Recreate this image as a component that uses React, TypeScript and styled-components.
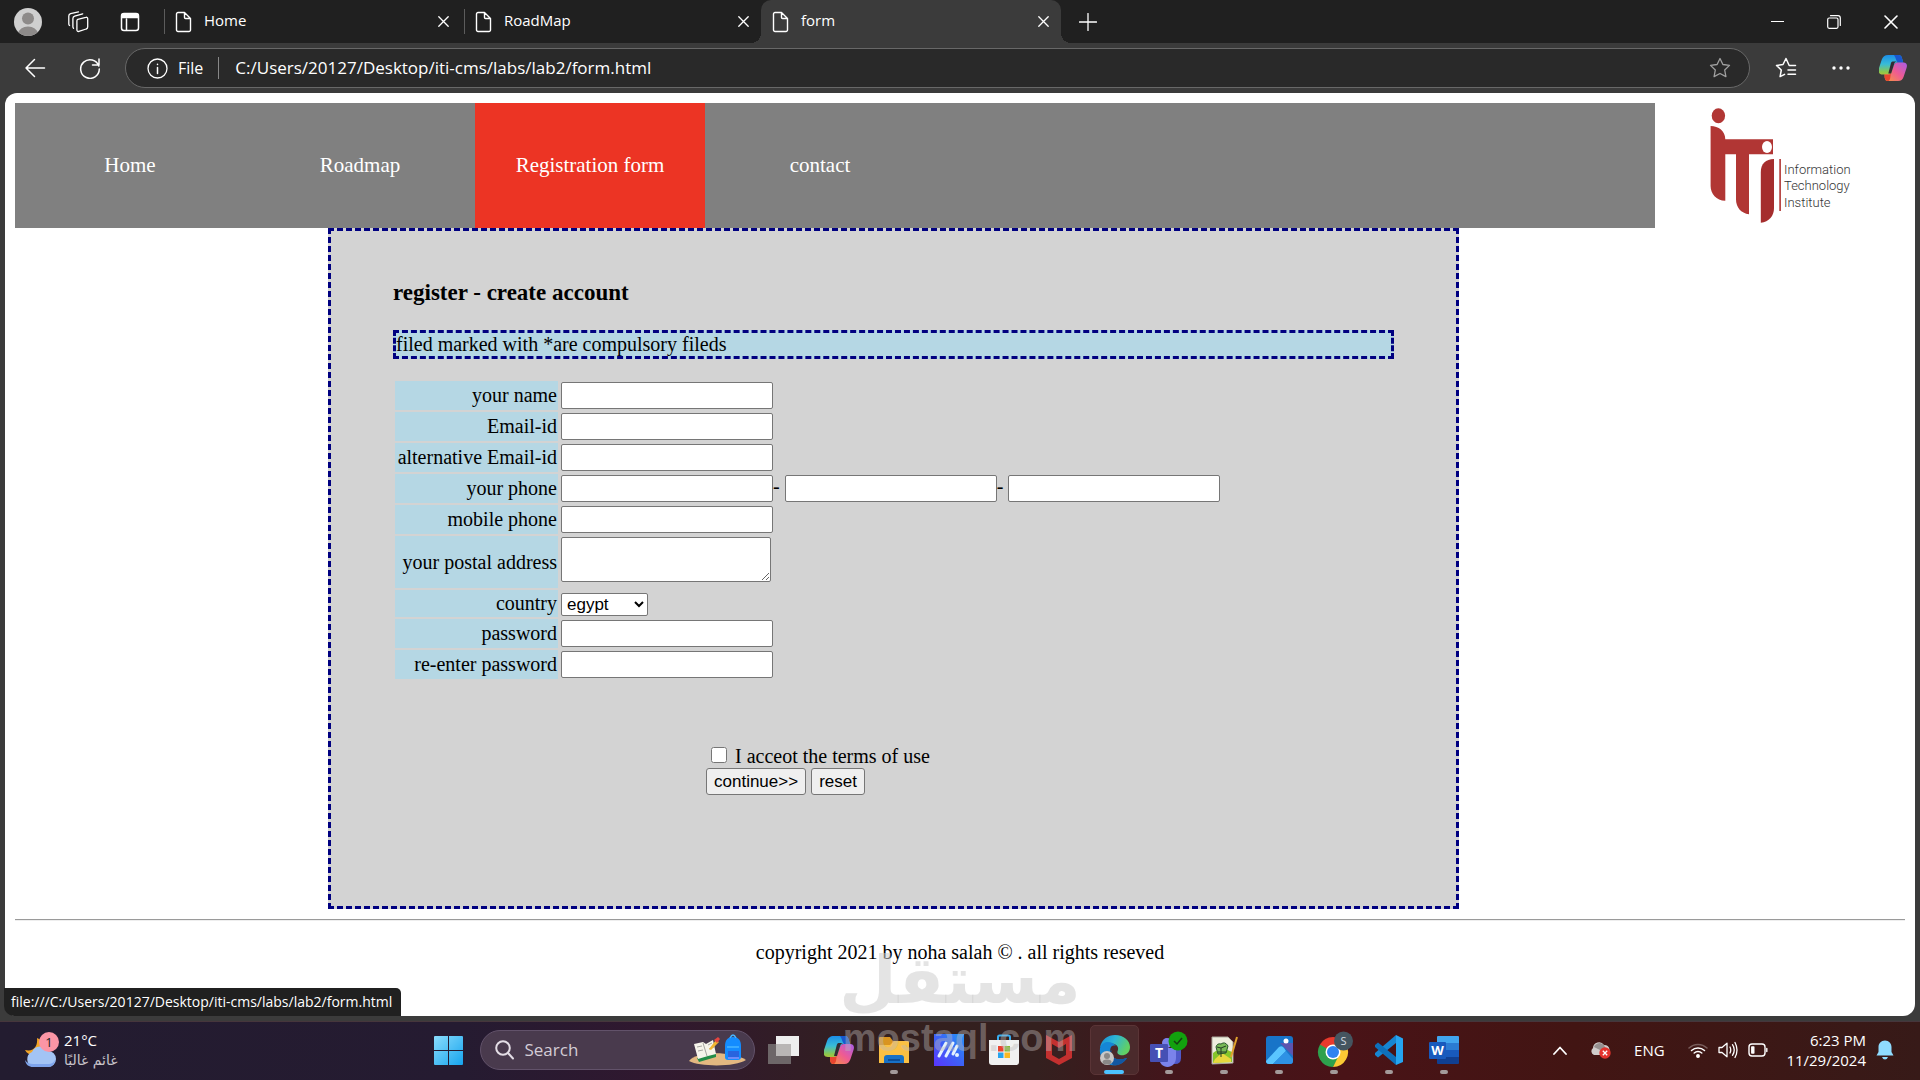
import React from "react";
import styled, { createGlobalStyle, css } from "styled-components";

const UI = `"Open Sans", "Noto Sans", "DejaVu Sans", sans-serif`;
const SERIF = `"Liberation Serif", "Times New Roman", serif`;
const SANS = `"Liberation Sans", Arial, sans-serif`;

const GlobalStyle = createGlobalStyle`
  *, *::before, *::after { box-sizing: border-box; }
  body { margin: 0; background: #3b3b3b; }
  button { font-family: inherit; color: inherit; cursor: pointer; }
`;

const Screen = styled.div`
  position: relative;
  display: flex;
  flex-direction: column;
  min-height: 100vh;
  font-family: ${UI};
`;

const PlainButton = styled.button<{ $w: number }>`
  display: flex;
  align-items: center;
  justify-content: center;
  flex: none;
  width: ${(p) => p.$w}px;
  height: 40px;
  padding: 0;
  border: 0;
  background: transparent;
`;

/* ---------- browser chrome ---------- */

const TabStrip = styled.header`
  display: flex;
  align-items: center;
  height: 43px;
  padding-left: 2px;
  background: #202020;
  color: #fff;
`;

const Tools = styled.div`
  display: flex;
  width: 159px;
`;

const Tab = styled.div<{ $active?: boolean }>`
  position: relative;
  display: flex;
  align-items: center;
  gap: 12px;
  width: 300px;
  height: 43px;
  padding: 0 3px 0 11px;
  font-size: 15px;
  ${(p) =>
    p.$active
      ? css`
          background: #3b3b3b;
          border-radius: 10px 10px 0 0;
          &::before,
          &::after {
            content: "";
            position: absolute;
            bottom: 0;
            width: 10px;
            height: 10px;
          }
          &::before {
            left: -10px;
            background: radial-gradient(circle at 0 0, #202020 10px, #3b3b3b 10px);
          }
          &::after {
            right: -10px;
            background: radial-gradient(circle at 100% 0, #202020 10px, #3b3b3b 10px);
          }
        `
      : css`
          background: linear-gradient(#5c5c5c, #5c5c5c) 3px 50% / 1px 25px no-repeat;
          padding-left: 14px;
        `}
`;

const TabTitle = styled.button`
  flex: 1;
  padding: 0 0 3px;
  border: 0;
  background: none;
  font-size: 15px;
  line-height: 20px;
  text-align: left;
`;

const WindowButtons = styled.div`
  display: flex;
  margin-left: auto;
`;

const Toolbar = styled.div`
  display: flex;
  align-items: center;
  height: 50px;
  padding: 0 2px 0 7px;
  background: #3b3b3b;
  color: #fff;
`;

const AddressBar = styled.div`
  display: flex;
  align-items: center;
  flex: 1;
  height: 40px;
  margin: 0 8px 0 7px;
  padding: 0 10px 0 21px;
  border: 1px solid #686868;
  border-radius: 20px;
  background: #292929;
`;

const Scheme = styled.span`
  padding: 0 15px 0 10px;
  border-right: 1px solid #888;
  font-size: 16px;
  line-height: 22px;
`;

const Address = styled.input`
  flex: 1;
  min-width: 0;
  margin-left: 16px;
  padding: 0;
  border: 0;
  outline: 0;
  background: transparent;
  color: #fff;
  font: 17px/24px ${UI};
`;

/* ---------- web page ---------- */

const Viewport = styled.div`
  position: relative;
  flex: 1;
  margin: 0 5px 5px;
  padding: 10px;
  border-radius: 12px;
  background: #fff;
  color: #000;
  font: 20px/23px ${SERIF};
`;

const PageHeader = styled.div`
  display: flex;
`;

const Nav = styled.nav`
  display: flex;
  flex: 1;
  height: 125px;
  background: #808080;
`;

const NavLink = styled.a<{ $active?: boolean }>`
  display: flex;
  align-items: center;
  justify-content: center;
  width: 230px;
  background: ${(p) => (p.$active ? "#ec3424" : "transparent")};
  color: #fff;
  font-size: 21px;
  text-decoration: none;
`;

const Form = styled.form`
  max-width: 1131px;
  margin-left: 313px;
  padding: 26px 62px 49px;
  border: 3px dashed #000080;
  background: #d3d3d3;
`;

const Title = styled.h3`
  margin: 22px 0 24px;
  font-size: 23px;
  line-height: 27px;
`;

const Notice = styled.div`
  margin-bottom: 20px;
  border: 3px dashed #000080;
  background: #b5d7e4;
`;

const Fields = styled.table`
  border-spacing: 2px;
`;

const LabelCell = styled.th`
  width: 163px;
  padding: 1px;
  background: #b5d7e4;
  font-weight: normal;
  text-align: right;
  white-space: nowrap;
`;

const FieldCell = styled.td<{ $bottom?: number }>`
  padding: 1px 1px ${(p) => p.$bottom ?? 1}px;
`;

const Split = styled.div`
  display: flex;
  white-space: pre;
`;

const boxed = css`
  display: block;
  border: 1px solid #767676;
  border-radius: 2px;
  background: #fff;
  font: 17px/20px ${SANS};
`;

const TextBox = styled.input`
  ${boxed}
  width: 212px;
  height: 27px;
  padding: 1px 2px;
`;

const AddressBox = styled.textarea`
  ${boxed}
  width: 210px;
  height: 45px;
  padding: 2px;
`;

const Country = styled.select`
  ${boxed}
  width: 87px;
  height: 23px;
  margin: 2px 0 0;
  padding: 0 0 0 1px;
  color: #000;
`;

const Actions = styled.div`
  margin: 62px 0 62px 313px;
`;

const Terms = styled.label`
  display: flex;
  align-items: center;
  gap: 8px;
  height: 25px;
  padding-top: 2px;
  padding-left: 5px;
`;

const Tick = styled.input`
  width: 16px;
  height: 16px;
  margin: 0 0 4px;
`;

const Buttons = styled.div`
  display: flex;
  gap: 5px;
`;

const FormButton = styled.button`
  height: 27px;
  padding: 0 7px;
  border: 1px solid #767676;
  border-radius: 3px;
  background: #efefef;
  font: 17px/20px ${SANS};
`;

const Rule = styled.hr`
  height: 2px;
  margin: 10px 0 20px;
  border: 0;
  border-top: 1px solid #9a9a9a;
  border-bottom: 1px solid #eee;
`;

const Copyright = styled.p`
  margin: 0;
  text-align: center;
`;

const StatusBubble = styled.div`
  position: absolute;
  left: -1px;
  bottom: 0;
  height: 28px;
  padding: 0 9px 0 7px;
  border-radius: 0 5px 0 10px;
  background: #202020;
  color: #fff;
  font: 14px/27px ${UI};
`;

/* ---------- watermark ---------- */

const Watermark = styled.div`
  position: absolute;
  left: 0;
  right: 0;
  bottom: 20px;
  display: flex;
  flex-direction: column;
  align-items: center;
  pointer-events: none;
`;

const WatermarkArabic = styled.span`
  color: rgba(205, 205, 205, 0.55);
  font: bold 66px/70px "DejaVu Sans", sans-serif;
`;

const WatermarkLatin = styled.span`
  color: rgba(190, 185, 185, 0.42);
  font: bold 38px/44px ${SANS};
`;

/* ---------- taskbar ---------- */

const Taskbar = styled.footer`
  display: grid;
  grid-template-columns: 1fr auto 1fr;
  align-items: center;
  height: 59px;
  padding-bottom: 2px;
  border-top: 1px solid #46363c;
  background: linear-gradient(90deg, #231c30 0%, #251b31 24%, #30182f 34%, #33201f 46%, #34201f 54%, #43151b 61%, #491317 70%, #421513 82%, #371a18 100%);
  color: #fff;
`;

const Weather = styled.button`
  display: flex;
  align-items: center;
  gap: 5px;
  justify-self: start;
  margin-left: 22px;
  padding: 0;
  border: 0;
  background: none;
  text-align: left;
`;

const WeatherText = styled.span`
  display: grid;
  font-size: 15px;
  line-height: 20px;
`;

const Muted = styled.span`
  color: #c8c3ca;
  font-family: "DejaVu Sans", sans-serif;
  font-size: 14px;
`;

const Dock = styled.div`
  display: flex;
  align-items: center;
  margin-right: 28px;
`;

const SearchPill = styled.label`
  display: flex;
  align-items: center;
  width: 275px;
  height: 40px;
  margin: 0 2px 0 4px;
  padding: 0 8px 0 14px;
  border: 1px solid #62526a;
  border-radius: 20px;
  background: #493a4d;
`;

const SearchBox = styled.input`
  flex: 1;
  min-width: 0;
  margin-left: 11px;
  padding: 0;
  border: 0;
  outline: 0;
  background: none;
  font: 17px/24px ${UI};
  &::placeholder {
    color: #d3ccd5;
    opacity: 1;
  }
`;

const AppButton = styled.button<{ $state?: "open" | "active" }>`
  display: grid;
  place-items: center;
  width: 49px;
  height: 50px;
  margin: 0 3px;
  padding: 0;
  border: 1px solid ${(p) => (p.$state === "active" ? "#5a3436" : "transparent")};
  border-radius: 5px;
  background: ${(p) => (p.$state === "active" ? "#4b2a2c" : "transparent")};
  position: relative;
  &::after {
    content: "";
    position: absolute;
    bottom: 0;
    width: ${(p) => (p.$state === "active" ? 20 : 8)}px;
    height: 4px;
    border-radius: 2px;
    background: ${(p) => (p.$state === "active" ? "#4cc2ff" : p.$state === "open" ? "#a39a9a" : "transparent")};
  }
`;

const Tray = styled.div`
  display: flex;
  align-items: center;
  justify-self: end;
  padding-right: 26px;
  font-size: 15px;
`;

const Language = styled.button`
  width: 58px;
  padding: 0;
  border: 0;
  background: none;
  font-size: 15px;
`;

const Status = styled.button`
  display: flex;
  align-items: center;
  gap: 10px;
  margin: 0 18px 0 10px;
  padding: 0;
  border: 0;
  background: none;
`;

const Clock = styled.time`
  margin-right: 10px;
  font-size: 15px;
  line-height: 20px;
  text-align: right;
`;

/* ---------- icons ---------- */

const line = { fill: "none", stroke: "currentColor", strokeLinecap: "round", strokeLinejoin: "round" } as const;

const PageIcon = () => (
  <svg width="17" height="22" viewBox="0 0 17 22" {...line} strokeWidth="1.4">
    <path d="M3 1.5h6.5L15.500 7.500V19a1.500 1.500 0 0 1-1.500 1.500H3A1.500 1.500 0 0 1 1.500 19V3A1.500 1.500 0 0 1 3 1.500ZM9.500 1.800V6.500a1 1 0 0 0 1 1h4.800" />
  </svg>
);

const CrossIcon = ({ size = 11 }: { size?: number }) => (
  <svg width={size} height={size} viewBox="0 0 11 11" {...line} strokeWidth="1.3">
    <path d="M.8.8 10.200 10.200M10.200.8.8 10.200" />
  </svg>
);

const ProfileIcon = () => (
  <svg width="28" height="28" viewBox="0 0 28 28">
    <clipPath id="face"><circle cx="14" cy="14" r="14" /></clipPath>
    <g clipPath="url(#face)">
      <rect width="28" height="28" fill="#cfcfcf" />
      <circle cx="14" cy="10.500" r="6" fill="#8d8a89" />
      <ellipse cx="14" cy="25" rx="9.500" ry="6.500" fill="#8d8a89" />
    </g>
  </svg>
);

const WorkspacesIcon = () => (
  <svg width="22" height="22" viewBox="0 0 22 22" {...line} strokeWidth="1.3">
    <path d="m10.800 8.300 8-2a1.500 1.500 0 0 1 1.900 1.500v8.300a2 2 0 0 1-1.500 1.900l-7.300 2.400a1.500 1.500 0 0 1-2-1.500v-8.700a2 2 0 0 1 .9-1.900ZM6.500 17.200a1.800 1.800 0 0 1-.6-1.400V7.600a2.500 2.500 0 0 1 1.800-2.400l8-2.400M2.600 14.500a1.800 1.800 0 0 1-.8-1.500V5a2.500 2.500 0 0 1 1.800-2.400L11.500.8" />
  </svg>
);

const TabActionsIcon = () => (
  <svg width="20" height="20" viewBox="0 0 20 20" {...line} strokeWidth="1.500">
    <rect x="1.500" y="1.500" width="17" height="17" rx="2.500" />
    <path d="M2 2.500h16v3H2z" fill="currentColor" />
    <path d="M6.500 7v11" />
  </svg>
);

const BackIcon = () => (
  <svg width="22" height="20" viewBox="0 0 22 20" {...line} strokeWidth="1.500"><path d="M20.500 10H2m8.500-8.500L2 10l8.500 8.500" /></svg>
);

const RefreshIcon = () => (
  <svg width="22" height="22" viewBox="0 0 22 22" {...line} strokeWidth="1.500"><path d="M19.800 9A9.300 9.300 0 1 0 20.300 12M20 2v6h-6.500" /></svg>
);

const InfoIcon = () => (
  <svg width="21" height="21" viewBox="0 0 21 21" {...line} strokeWidth="1.300"><circle cx="10.500" cy="10.500" r="9.500" /><path d="M10.500 9.500v6M10.500 6.200v.3" strokeWidth="1.500" /></svg>
);

const StarIcon = () => (
  <svg width="22" height="22" viewBox="0 0 22 22" {...line} stroke="#a0a0a0" strokeWidth="1.300"><path d="m11 1.500 2.900 6 6.600.9-4.800 4.600 1.200 6.600L11 16.500l-5.900 3.100L6.300 13 1.500 8.400l6.600-.9Z" /></svg>
);

const FavoritesIcon = () => (
  <svg width="22" height="22" viewBox="0 0 22 22" {...line} strokeWidth="1.500"><path d="M20.500 8.500h-6.300L11 1.500 8 7.500l-6.500.9L6.300 13l-1.200 6.600 4.500-2.300M13 13h7.500M13 17.300h7.500" /></svg>
);

const CopilotIcon = ({ id, size = 30 }: { id: string; size?: number }) => (
  <svg width={size} height={size} viewBox="0 0 30 30">
    <defs>
      <linearGradient id={`${id}a`} x2="0" y2="1"><stop stopColor="#1c8ee8" /><stop offset=".35" stopColor="#38bcd8" /><stop offset=".65" stopColor="#8dc84a" /><stop offset="1" stopColor="#f7b52e" /></linearGradient>
      <linearGradient id={`${id}b`} x1="1" x2="0" y2="1"><stop stopColor="#a85ce8" /><stop offset=".5" stopColor="#ef5b92" /><stop offset="1" stopColor="#f79a3c" /></linearGradient>
    </defs>
    <path d="M10 1h11c2 0 3 1 3.500 3L26 9h-6c-2 0-3 1-3.600 3L13 24c-.8 3-2 5-4 5-2-1-2-4-3-7H4c-4 0-5-3-4-7L3 6c1-3 3-5 7-5Z" fill={`url(#${id}a)`} />
    <path d="M16 1h5c2 0 3 1 3.500 3L26 9h-6c-2-2-2-6-4-8Z" fill="#1957cf" />
    <path d="M20 9h6c4 0 4.500 3 3.500 6l-3 9c-1 3-3 5-6 5h-11c-2 0-3-1-3.500-4L6 22h4c2 0 3-1 3.600-3L16 12c.8-2 2-3 4-3Z" fill={`url(#${id}b)`} />
    <path d="M6 22h4c1 0 2-.5 2.700-1.300L12 26c-.6 2-1.400 3-2.500 3-2 0-3-1-3.500-4Z" fill="#e8452f" />
    <path d="M14.500 8h4.500c-2 .5-2.500 1.500-3 3.500L13 21h-3l2.500-10c.3-1.500 1-3 2-3Z" fill="#332b33" />
  </svg>
);

const ItiLogo = () => (
  <svg width="250" height="125" viewBox="0 0 250 125" role="img" aria-label="Information Technology Institute">
    <g fill="#b13634">
      <ellipse cx="63.400" cy="12.700" rx="6.700" ry="7.500" />
      <path d="M55.600 23c8 0 14.700 5 14.700 13.300H118v15H94v60c-8-1-13-7-13-15v-45H70.300v46.400c-9 0-14.700-7-14.700-14.700Z" />
      <path d="M119 56v49c0 8-5 14-13.200 14.700V69c0-8 5-13 13.200-13Z" fill="#a52d2d" />
      <rect x="124.300" y="56" width="1.600" height="52" />
    </g>
    <ellipse cx="112" cy="44" rx="5" ry="6" fill="#fff" />
    <g fill="#333" fontFamily="Roboto, sans-serif" fontWeight="300" fontSize="13">
      <text x="129" y="71">Information</text>
      <text x="129" y="87">Technology</text>
      <text x="129" y="104">Institute</text>
    </g>
  </svg>
);

const WeatherIcon = () => (
  <svg width="37" height="38" viewBox="0 0 37 38">
    <path d="M15 7c1 8-3 14-12 12 3 6 12 7 17 1l3-9Z" fill="#f2a526" />
    <path d="M11 36a8 8 0 0 1-1-15 9 9 0 0 1 16-1 7.800 7.800 0 0 1 0 16Z" fill="#a3c4f5" />
    <path d="M3 29c1 5 4 7 8 7h15c4 0 7-3 7-7-2 4-5 4-8 4H11c-3 0-6-1-8-4Z" fill="#7ea4ec" />
    <circle cx="27" cy="11" r="10" fill="#fb95a5" />
    <text x="27" y="16" textAnchor="middle" fontFamily="Open Sans, sans-serif" fontSize="13" fill="#222">1</text>
  </svg>
);

const StartIcon = () => (
  <svg width="29" height="29" viewBox="0 0 29 29">
    <defs><linearGradient id="win" x2="1" y2="1"><stop stopColor="#8adcfc" /><stop offset="1" stopColor="#16a4ee" /></linearGradient></defs>
    <path d="M0 1q0-1 1-1h13v14H0ZM15 0h13q1 0 1 1v13H15ZM0 15h14v14H1q-1 0-1-1ZM15 15h14v13q0 1-1 1H15Z" fill="url(#win)" />
  </svg>
);

const SearchIcon = () => (
  <svg width="19" height="20" viewBox="0 0 19 20" {...line} stroke="#e4dee6" strokeWidth="2"><circle cx="8" cy="8" r="6.800" /><path d="m13 13 5 5.500" /></svg>
);

const SchoolArt = () => (
  <svg width="57" height="32" viewBox="0 0 57 32">
    <path d="M0 27c8-10 42-10 57-1-10 7-46 7-57 1Z" fill="#e3b881" />
    <path d="m8 24 19-5v4l-17 5Z" fill="#238c48" />
    <path d="m5 10 9-2 3 2 7-4 3 14-8 2-10 3Z" fill="#f6f4eb" />
    <path d="m14 9 4 13M8 13l5-1m-4 5 5-1m5-5 4-2m-3 6 5-2" stroke="#a5a5a0" fill="none" />
    <path d="m20 15 7-9 3 2-8 8Z" fill="#f2b632" /><path d="m25 6 4-3 2 2-3 4Z" fill="#e64540" />
    <path d="M36 12c0-6 3-9 8-9s8 3 8 9v11q0 3-3 3H39q-3 0-3-3Z" fill="#148cff" />
    <path d="M41 4q3-6 6 0M38 13h12" fill="none" stroke="#48b5ff" strokeWidth="1.500" />
    <path d="M39 17h11v6H39Z" fill="#2864df" /><path d="M39 24h11" stroke="#c78af3" />
  </svg>
);

const TaskViewIcon = () => (
  <svg width="32" height="30" viewBox="0 0 32 30"><path d="M0 9h23v20H0Z" fill="#6d6668" /><path d="M8 1h23v20H8Z" fill="#eee" /><path d="M8 9h15v12H8Z" fill="#b9b6b5" /></svg>
);

const ExplorerIcon = () => (
  <svg width="30" height="28" viewBox="0 0 30 28"><path d="M0 2q0-1 1-1h10l3 4h14v6H0Z" fill="#d99420" /><path d="M0 9h11l4-4h14q1 0 1 1v21H0Z" fill="#fbc043" /><path d="M5 27v-5q0-3 3-3h14q3 0 3 3v5Z" fill="#1871c6" /><path d="M9 23h12v2H9Z" fill="#0b4e98" /></svg>
);

const MarkIcon = () => (
  <svg width="30" height="32" viewBox="0 0 30 32">
    <defs><linearGradient id="mk" x1="0" x2="1" y1="1" y2="0"><stop stopColor="#5935ff" /><stop offset=".55" stopColor="#3a66f5" /><stop offset="1" stopColor="#2496f8" /></linearGradient></defs>
    <rect width="30" height="32" fill="url(#mk)" />
    <path d="m5 22 7-13M12 22l7-13M19 20l4-8" stroke="#e3f2ff" strokeWidth="3" fill="none" strokeLinecap="round" /><circle cx="23" cy="21" r="2" fill="#e3f2ff" />
  </svg>
);

const StoreIcon = () => (
  <svg width="30" height="32" viewBox="0 0 30 32"><path d="M9 8V3q0-1.500 1.500-1.500h9Q21 1.500 21 3v5" fill="none" stroke="#38adf0" strokeWidth="2" /><path d="M0 6h30v22q0 3-3 3H3q-3 0-3-3Z" fill="#f1f1f1" /><path d="M9 12h5.500v5.500H9Z" fill="#e8432f" /><path d="M15.500 12H21v5.500h-5.500Z" fill="#80ba32" /><path d="M9 18.500h5.500V24H9Z" fill="#28a4ee" /><path d="M15.500 18.500H21V24h-5.500Z" fill="#f9b923" /></svg>
);

const ShieldIcon = () => (
  <svg width="28" height="32" viewBox="0 0 28 32"><path d="m1 1 13 7 13-7v23l-13 7-13-7Z" fill="#c4302f" /><path d="m7 10 7 4 7-4v11l-7 4-7-4Z" fill="#3a2020" /></svg>
);

const EdgeIcon = () => (
  <svg width="31" height="32" viewBox="0 0 31 32">
    <defs><linearGradient id="edge" x2="1" y2=".4"><stop stopColor="#1689d8" /><stop offset=".5" stopColor="#2db6d4" /><stop offset="1" stopColor="#61cf65" /></linearGradient></defs>
    <path d="M1 13C3 5 9 1 16 1c9 0 15 6 15 12 0 7-6 9-10 8-3-1-3-3-2-5 1-4-3-7-8-6-4 1-8 2-10 3Z" fill="url(#edge)" />
    <path d="M1 14C4 6 13 7 17 12c-5-2-7 3-5 8 3 7 10 6 16 4-4 6-10 8-16 7C4 29 0 22 1 14Z" fill="#1586d5" />
    <path d="M13 16c-3 5 1 12 15 8-4 6-9 8-14 7-5-4-6-12-1-15Z" fill="#1257a2" />
    <circle cx="8" cy="24" r="7" fill="#c9c7c6" /><circle cx="8" cy="22" r="3" fill="#8a8887" /><ellipse cx="8" cy="28" rx="4.500" ry="2.500" fill="#8a8887" />
  </svg>
);

const TeamsIcon = () => (
  <svg width="38" height="38" viewBox="0 0 38 38">
    <circle cx="17" cy="12" r="5" fill="#7b83eb" /><path d="M21 17h10v10q0 6-6 6h-4Z" fill="#5059c9" />
    <path d="M9 17h17v10c0 5-4 9-8.500 9S9 32 9 27Z" fill="#7b83eb" /><rect y="13" width="18" height="18" rx="1" fill="#4650b4" />
    <text x="9" y="27" textAnchor="middle" fontFamily="Open Sans, sans-serif" fontWeight="700" fontSize="14" fill="#fff">T</text>
    <circle cx="28" cy="10" r="9.500" fill="#13a10e" /><path d="m24 10 3 3 5-6" fill="none" stroke="#153d13" strokeWidth="1.500" />
  </svg>
);

const NotepadIcon = () => (
  <svg width="29" height="30" viewBox="0 0 29 30"><path d="m2 2 16 0 5 5 0 21-21 1Z" fill="#eeeede" stroke="#aaa69a" /><path d="M3 18q9-7 19-1v10l-19 1Z" fill="#86c52b" /><path d="m5 24 7-6 9 6v3l-18 1Z" fill="#e7d83d" /><path d="M6 12q1-4 5-3 4-3 7 2l-2 7-8 1Z" fill="#79b957" stroke="#27582b" /><path d="m7 12 4 1 5-2m-8 6h8m-5-4v9" stroke="#243b25" fill="none" /><path d="m27 2-6 20" stroke="#dfa22d" strokeWidth="2" /></svg>
);

const PhotosIcon = () => (
  <svg width="27" height="28" viewBox="0 0 27 28"><clipPath id="ph"><rect width="27" height="28" rx="3" /></clipPath><g clipPath="url(#ph)"><path d="M0 0h27v28H0Z" fill="#1874c8" /><path d="m14 7 13 13V7Z" fill="#5b55af" /><path d="M0 25 13 11q3-2 5 1l2 3L7 28H0Z" fill="#5ac5ff" /><path d="m7 28 13-13 7 8v5Z" fill="#2e92e5" /><circle cx="20" cy="5" r="2.500" fill="#fff" /></g></svg>
);

const ChromeIcon = () => (
  <svg width="38" height="38" viewBox="0 0 38 38">
    <path d="M18 21V6A15 15 0 0 0 5 13.500L11.500 25Z" fill="#e8392c" /><path d="M18 6a15 15 0 0 1 13 7.500H18Z" fill="#e8392c" />
    <path d="M5 13.500A15 15 0 0 0 18 36l6.500-11Z" fill="#2ea14d" /><path d="M31 13.500A15 15 0 0 1 18 36l7-14-7-8.500Z" fill="#fcc934" />
    <circle cx="18" cy="21" r="7.500" fill="#fff" /><circle cx="18" cy="21" r="6" fill="#2e83f0" /><circle cx="28.500" cy="10" r="9.500" fill="#455560" />
    <text x="28.500" y="14" textAnchor="middle" fontFamily="Open Sans, sans-serif" fontSize="11" fill="#d4dce2">S</text>
  </svg>
);

const CodeIcon = () => (
  <svg width="30" height="30" viewBox="0 0 30 30"><path d="m22 0 7 3.500V27l-7 3Z" fill="#25a5f1" /><path d="M22 0v8L4 22.500 1 20v-2Z" fill="#1786d2" /><path d="M22 30v-8L4 7.500 1 10v2Z" fill="#0e70bb" /></svg>
);

const WordIcon = () => (
  <svg width="30" height="30" viewBox="0 0 30 30"><path d="M8 2q0-1 1-1h20q1 0 1 1v6H8Z" fill="#41a5ee" /><path d="M8 8h22v7H8Z" fill="#2b7cd3" /><path d="M8 15h22v7H8Z" fill="#185abd" /><path d="M8 22h22v6q0 1-1 1H9q-1 0-1-1Z" fill="#103f91" /><rect y="7" width="17" height="17" rx="1" fill="#185abd" /><text x="8.500" y="20" textAnchor="middle" fontFamily="Open Sans, sans-serif" fontWeight="700" fontSize="13" fill="#fff">W</text></svg>
);

const CloudIcon = () => (
  <svg width="21" height="18" viewBox="0 0 21 18"><path d="M4 14a4 4 0 0 1-1-7 6 6 0 0 1 11-3 5 5 0 0 1 1 10Z" fill="#d0cccb" /><path d="M4 6a6 6 0 0 1 10-2l2 4-6 1Z" fill="#969190" /><circle cx="15" cy="12" r="5.700" fill="#e3332d" /><path d="m12.800 9.800 4.400 4.400m0-4.400-4.400 4.400" stroke="#fff" strokeWidth="1.300" /></svg>
);

const WifiIcon = () => (
  <svg width="20" height="16" viewBox="0 0 20 16" {...line} strokeWidth="1.500"><path d="M1 6a13 13 0 0 1 18 0" opacity=".3" /><path d="M3.500 8.500a9.500 9.500 0 0 1 13 0M6.200 11a5.800 5.800 0 0 1 7.600 0" /><circle cx="10" cy="14" r="1.200" fill="currentColor" /></svg>
);

const SoundIcon = () => (
  <svg width="20" height="18" viewBox="0 0 20 18" {...line} strokeWidth="1.300"><path d="M1 6.500h3l5-4.300v13.600l-5-4.300H1ZM12 6q1.500 3 0 6M14.500 3.700q3.500 5.300 0 10.600M17 1.500q4 7.500 0 15" /></svg>
);

const BatteryIcon = () => (
  <svg width="20" height="14" viewBox="0 0 20 14" {...line} strokeWidth="1.400"><rect x="1" y="1" width="16" height="12" rx="3" /><path d="M3.800 4h2v6h-2ZM18.800 5.500v3" fill="currentColor" /></svg>
);

const BellIcon = () => (
  <svg width="18" height="20" viewBox="0 0 18 20" fill="#8fdcff"><path d="M9 .5c4 0 6.500 3 6.500 6.500v5l2 3.500H.5l2-3.500V7C2.500 3.500 5 .5 9 .5ZM6 17h6q-1 2.500-3 2.500T6 17Z" /></svg>
);

/* ---------- composition ---------- */

const tabs = ["Home", "RoadMap", "form"];
const links = ["Home", "Roadmap", "Registration form", "contact"];

const apps: { name: string; icon: React.ReactNode; state?: "open" | "active" }[] = [
  { name: "Task view", icon: <TaskViewIcon /> },
  { name: "Copilot", icon: <CopilotIcon id="dock" /> },
  { name: "File Explorer", icon: <ExplorerIcon />, state: "open" },
  { name: "Assistant", icon: <MarkIcon /> },
  { name: "Store", icon: <StoreIcon /> },
  { name: "McAfee", icon: <ShieldIcon /> },
  { name: "Edge", icon: <EdgeIcon />, state: "active" },
  { name: "Teams", icon: <TeamsIcon />, state: "open" },
  { name: "Notepad++", icon: <NotepadIcon />, state: "open" },
  { name: "Photos", icon: <PhotosIcon />, state: "open" },
  { name: "Chrome", icon: <ChromeIcon />, state: "open" },
  { name: "Code", icon: <CodeIcon />, state: "open" },
  { name: "Word", icon: <WordIcon />, state: "open" },
];

function Field({ id, label, bottom, children }: { id: string; label: string; bottom?: number; children: React.ReactNode }) {
  return (
    <tr>
      <LabelCell scope="row"><label htmlFor={id}>{label}</label></LabelCell>
      <FieldCell $bottom={bottom}>{children}</FieldCell>
    </tr>
  );
}

function Browser() {
  return (
    <>
      <TabStrip>
        <Tools>
          <PlainButton $w={52} aria-label="Profile"><ProfileIcon /></PlainButton>
          <PlainButton $w={48} aria-label="Workspaces"><WorkspacesIcon /></PlainButton>
          <PlainButton $w={56} aria-label="Tab actions"><TabActionsIcon /></PlainButton>
        </Tools>
        {tabs.map((t) => (
          <Tab key={t} $active={t === "form"}>
            <PageIcon />
            <TabTitle>{t}</TabTitle>
            <PlainButton $w={30} aria-label={`Close ${t}`}><CrossIcon /></PlainButton>
          </Tab>
        ))}
        <PlainButton $w={54} aria-label="New tab">
          <svg width="18" height="18" viewBox="0 0 18 18" {...line} strokeWidth="1.300"><path d="M9 .5v17M.5 9h17" /></svg>
        </PlainButton>
        <WindowButtons>
          <PlainButton $w={58} aria-label="Minimize"><svg width="13" height="13"><path d="M0 6.500h13" stroke="#fff" /></svg></PlainButton>
          <PlainButton $w={56} aria-label="Restore">
            <svg width="14" height="14" viewBox="0 0 14 14" {...line} strokeWidth="1.200"><rect x=".7" y="3" width="10.300" height="10.300" rx="1.500" /><path d="M3.500.7H11A2.300 2.300 0 0 1 13.300 3v7.500" /></svg>
          </PlainButton>
          <PlainButton $w={58} aria-label="Close window"><CrossIcon size={14} /></PlainButton>
        </WindowButtons>
      </TabStrip>
      <Toolbar>
        <PlainButton $w={55} aria-label="Back"><BackIcon /></PlainButton>
        <PlainButton $w={56} aria-label="Refresh"><RefreshIcon /></PlainButton>
        <AddressBar>
          <InfoIcon />
          <Scheme>File</Scheme>
          <Address aria-label="Address" defaultValue="C:/Users/20127/Desktop/iti-cms/labs/lab2/form.html" />
          <PlainButton $w={38} aria-label="Add to favorites"><StarIcon /></PlainButton>
        </AddressBar>
        <PlainButton $w={56} aria-label="Favorites"><FavoritesIcon /></PlainButton>
        <PlainButton $w={54} aria-label="More"><svg width="18" height="4" fill="#fff"><circle cx="2" cy="2" r="1.700" /><circle cx="9" cy="2" r="1.700" /><circle cx="16" cy="2" r="1.700" /></svg></PlainButton>
        <PlainButton $w={50} aria-label="Copilot"><CopilotIcon id="bar" size={28} /></PlainButton>
      </Toolbar>
    </>
  );
}

export default function App() {
  return (
    <Screen>
      <GlobalStyle />
      <Browser />
      <Viewport>
        <PageHeader>
          <Nav>
            {links.map((l) => (
              <NavLink key={l} href="#" $active={l === "Registration form"}>{l}</NavLink>
            ))}
          </Nav>
          <ItiLogo />
        </PageHeader>
        <Form onSubmit={(e) => e.preventDefault()}>
          <Title>register - create account</Title>
          <Notice>filed marked with *are compulsory fileds</Notice>
          <Fields>
            <tbody>
              <Field id="name" label="your name"><TextBox id="name" /></Field>
              <Field id="email" label="Email-id"><TextBox id="email" type="email" /></Field>
              <Field id="alt" label="alternative Email-id"><TextBox id="alt" type="email" /></Field>
              <Field id="phone" label="your phone">
                <Split>
                  <TextBox id="phone" />{"- "}
                  <TextBox aria-label="phone part 2" />{"- "}
                  <TextBox aria-label="phone part 3" />
                </Split>
              </Field>
              <Field id="mobile" label="mobile phone"><TextBox id="mobile" /></Field>
              <Field id="postal" label="your postal address" bottom={6}><AddressBox id="postal" /></Field>
              <Field id="country" label="country"><Country id="country"><option>egypt</option></Country></Field>
              <Field id="pass" label="password"><TextBox id="pass" type="password" /></Field>
              <Field id="again" label="re-enter password"><TextBox id="again" type="password" /></Field>
            </tbody>
          </Fields>
          <Actions>
            <Terms><Tick type="checkbox" />I acceot the terms of use</Terms>
            <Buttons>
              <FormButton type="submit">continue&gt;&gt;</FormButton>
              <FormButton type="reset">reset</FormButton>
            </Buttons>
          </Actions>
        </Form>
        <Rule />
        <Copyright>copyright 2021 by noha salah © . all rights reseved</Copyright>
        <StatusBubble>file:///C:/Users/20127/Desktop/iti-cms/labs/lab2/form.html</StatusBubble>
      </Viewport>
      <Taskbar>
        <Weather>
          <WeatherIcon />
          <WeatherText>21°C<Muted dir="rtl" lang="ar">غائم غالبًا</Muted></WeatherText>
        </Weather>
        <Dock>
          <PlainButton $w={55} aria-label="Start"><StartIcon /></PlainButton>
          <SearchPill><SearchIcon /><SearchBox aria-label="Search" placeholder="Search" /><SchoolArt /></SearchPill>
          {apps.map((a) => (
            <AppButton key={a.name} aria-label={a.name} $state={a.state}>{a.icon}</AppButton>
          ))}
        </Dock>
        <Tray>
          <PlainButton $w={40} aria-label="Hidden icons"><svg width="14" height="9" viewBox="0 0 14 9" {...line} strokeWidth="1.800"><path d="m1 8 6-6.500L13 8" /></svg></PlainButton>
          <PlainButton $w={40} aria-label="OneDrive"><CloudIcon /></PlainButton>
          <Language>ENG</Language>
          <Status aria-label="Network, sound, battery"><WifiIcon /><SoundIcon /><BatteryIcon /></Status>
          <Clock>6:23 PM<br />11/29/2024</Clock>
          <BellIcon />
        </Tray>
      </Taskbar>
      <Watermark aria-hidden="true">
        <WatermarkArabic lang="ar">مستقل</WatermarkArabic>
        <WatermarkLatin>mostaql.com</WatermarkLatin>
      </Watermark>
    </Screen>
  );
}
